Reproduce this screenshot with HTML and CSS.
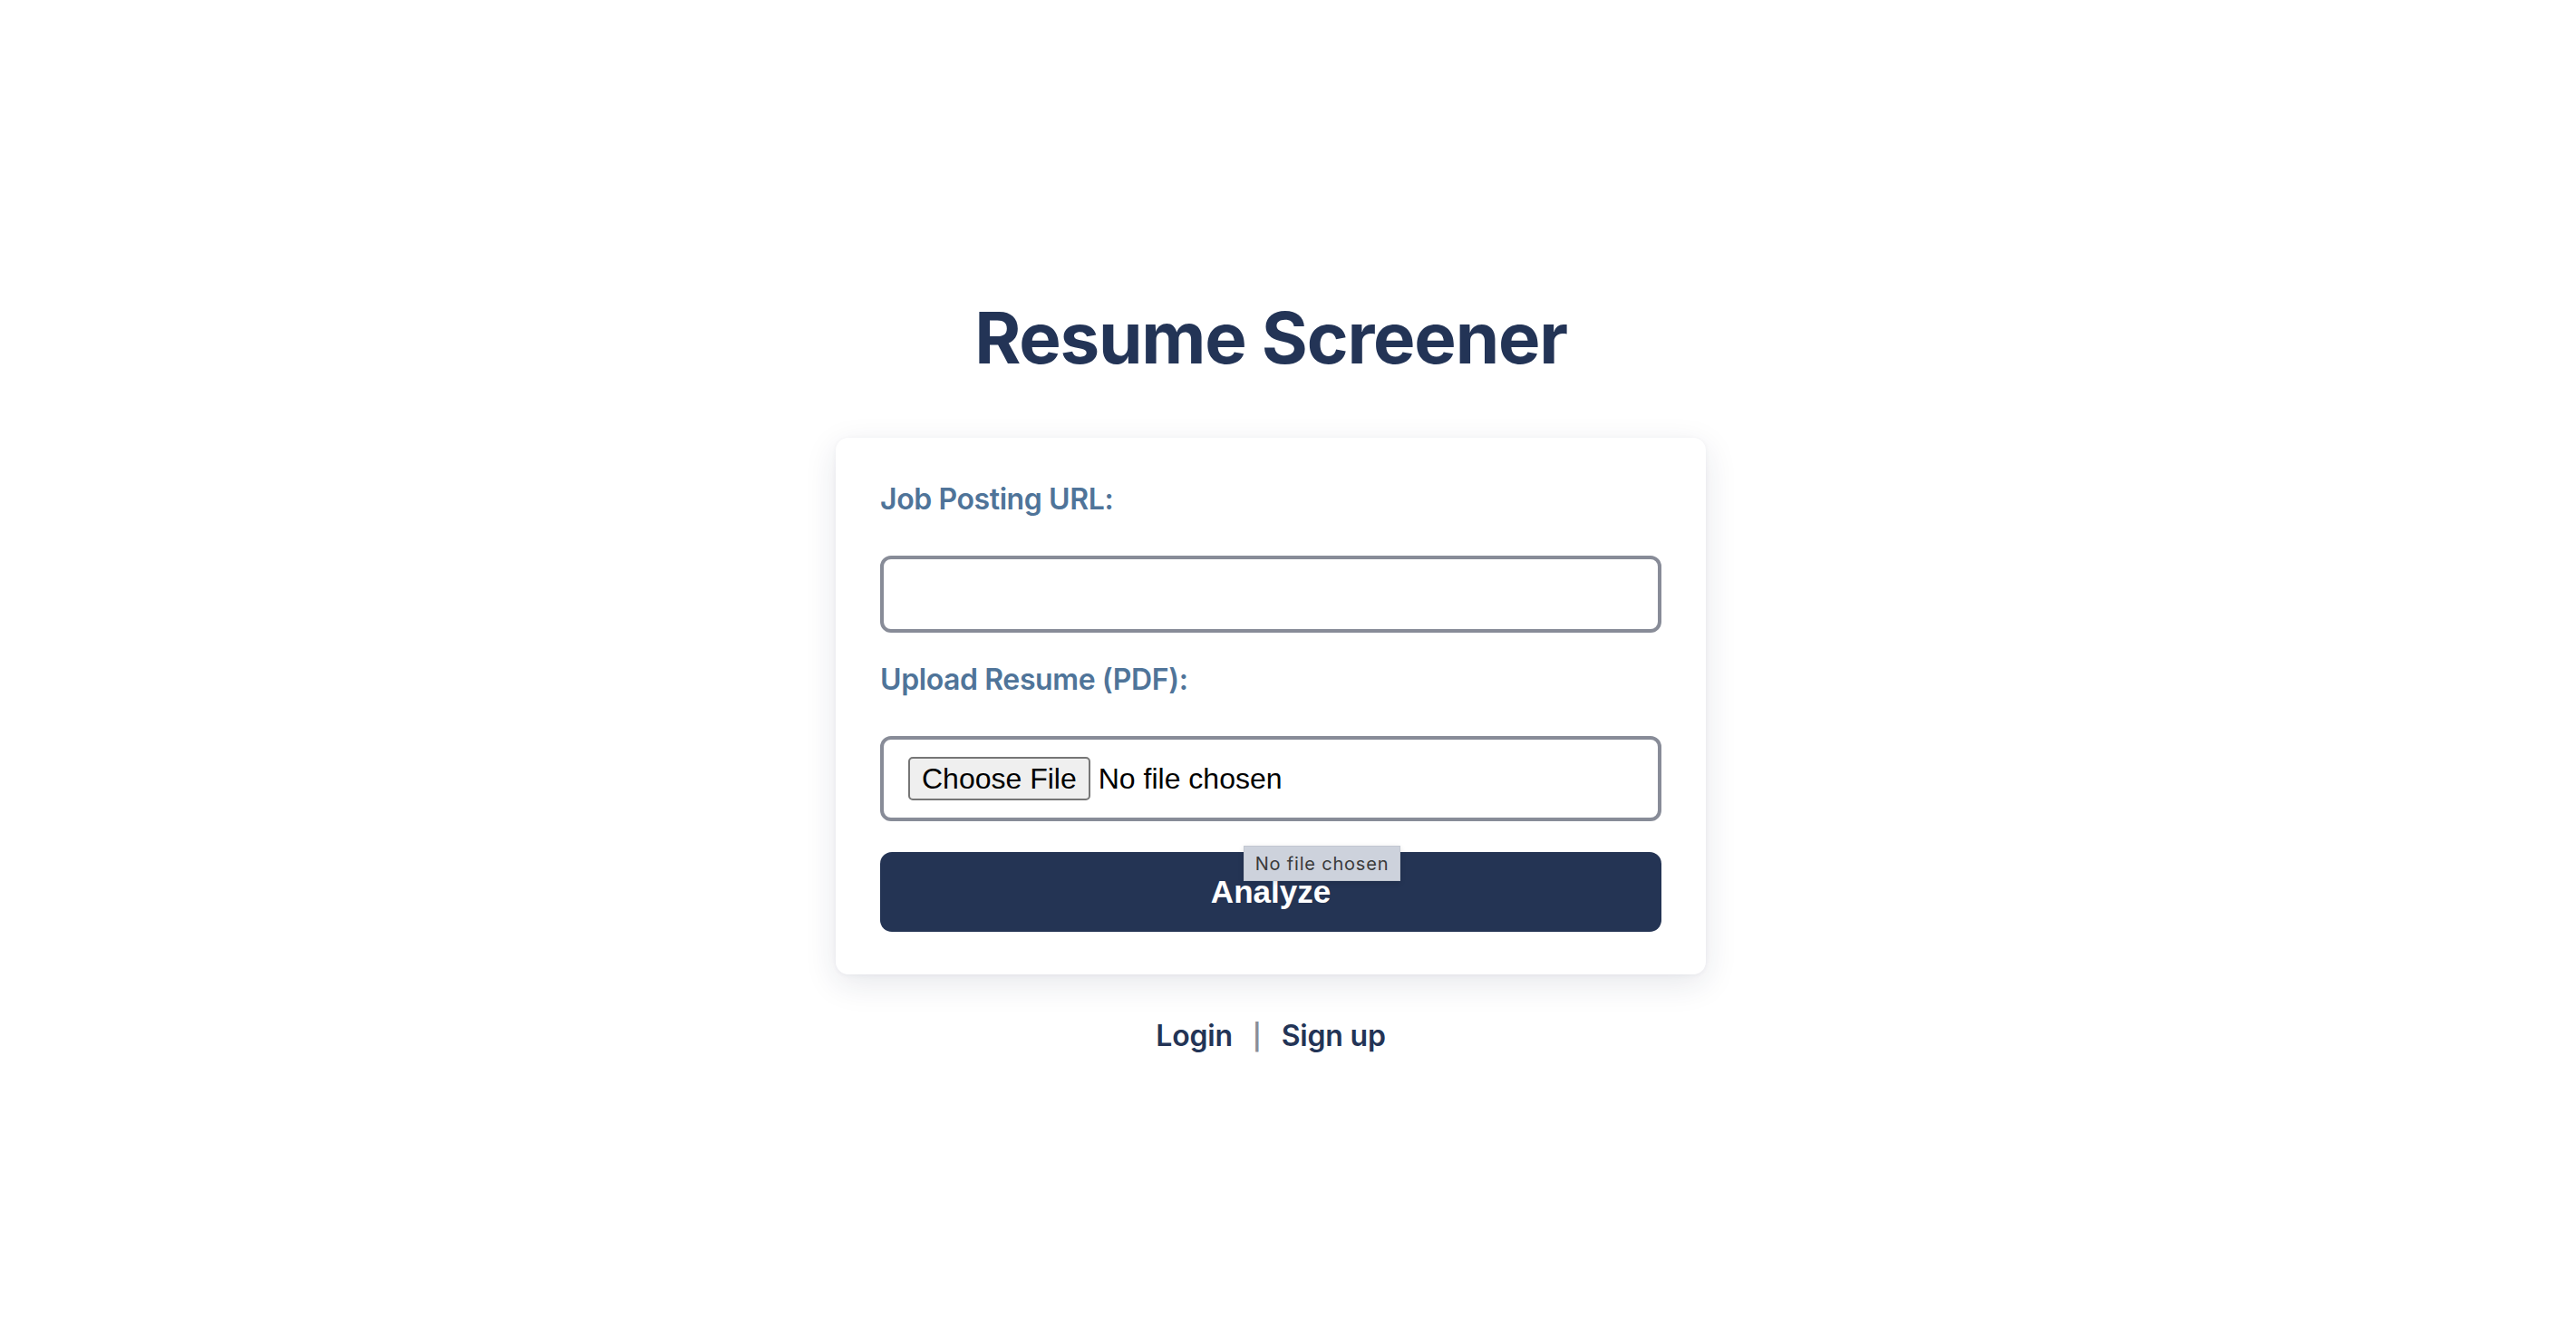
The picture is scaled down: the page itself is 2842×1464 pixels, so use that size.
FILE: index.html
```html
<!DOCTYPE html>
<html lang="en">
<head>
<meta charset="utf-8">
<title>Resume Screener</title>
<link rel="stylesheet" href="styles.css">
</head>
<body>
<main class="page">
  <h1 class="title">Resume Screener</h1>
  <form class="card">
    <label class="field-label" for="url">Job Posting URL:</label>
    <input class="text-input" id="url" type="text">
    <label class="field-label" for="resume">Upload Resume (PDF):</label>
    <div class="file-box">
      <span class="file-btn">Choose File</span>
      <span class="file-name">No file chosen</span>
    </div>
    <button class="submit" type="button">Analyze</button>
    <div class="tooltip">No file chosen</div>
  </form>
  <nav class="links">
    <a class="link" href="#">Login</a>
    <span class="sep">|</span>
    <a class="link" href="#">Sign up</a>
  </nav>
</main>
</body>
</html>
```
FILE: styles.css
```css
html, body {
  margin: 0;
  padding: 0;
  background: #ffffff;
}

body {
  font-family: "Inter", "Liberation Sans", sans-serif;
}

.page {
  display: flex;
  flex-direction: column;
  align-items: center;
  padding: 326px 38px 0 0;
}

.title {
  margin: 0 0 63px;
  font-size: 78px;
  font-weight: 700;
  line-height: 94px;
  color: #233456;
  letter-spacing: -1.2px;
}

.card {
  position: relative;
  box-sizing: border-box;
  width: 960px;
  padding: 48px 49px 47px;
  background: #ffffff;
  border-radius: 14px;
  box-shadow: 0 10px 36px rgba(30, 40, 70, 0.11), 0 1px 5px rgba(30, 40, 70, 0.05);
  display: flex;
  flex-direction: column;
}

.field-label {
  display: block;
  font-size: 32px;
  font-weight: 600;
  line-height: 39px;
  letter-spacing: -0.4px;
  color: #4f7499;
  margin-bottom: 43px;
}

.text-input {
  box-sizing: border-box;
  width: 100%;
  height: 85px;
  margin: 0 0 32px;
  border: 4px solid #888c98;
  border-radius: 12px;
  background: #ffffff;
  outline: none;
}

.file-box {
  box-sizing: border-box;
  height: 94px;
  margin-bottom: 34px;
  border: 4px solid #888c98;
  border-radius: 12px;
  padding: 0 27px;
  display: flex;
  align-items: center;
  font-family: "Liberation Sans", Arial, sans-serif;
  font-size: 32px;
  color: #000000;
}

.file-btn {
  box-sizing: border-box;
  height: 48px;
  padding: 0 13px;
  border: 2px solid #767676;
  border-radius: 5px;
  background: #efefef;
  display: flex;
  align-items: center;
  margin-right: 9px;
}

.submit {
  height: 88px;
  border: none;
  border-radius: 13px;
  background: #243454;
  color: #ffffff;
  font-family: "Liberation Sans", Arial, sans-serif;
  font-size: 35px;
  font-weight: 700;
  cursor: pointer;
}

.tooltip {
  position: absolute;
  left: 450px;
  top: 450px;
  box-sizing: border-box;
  width: 173px;
  height: 39px;
  display: flex;
  align-items: center;
  justify-content: center;
  background: #cdd2dc;
  border: 1px solid #c2c7d1;
  box-shadow: 0 2px 6px rgba(0, 0, 0, 0.12);
  font-family: "Inter", "Liberation Sans", sans-serif;
  font-size: 20px;
  letter-spacing: 0.8px;
  color: #3a3a3a;
}

.links {
  margin-top: 48px;
  display: flex;
  align-items: baseline;
  font-size: 32px;
  font-weight: 600;
  line-height: 39px;
  letter-spacing: -0.2px;
}

.link {
  color: #233456;
  text-decoration: none;
}

.sep {
  color: #8a8d98;
  font-size: 28px;
  margin: 0 22px;
}
```
